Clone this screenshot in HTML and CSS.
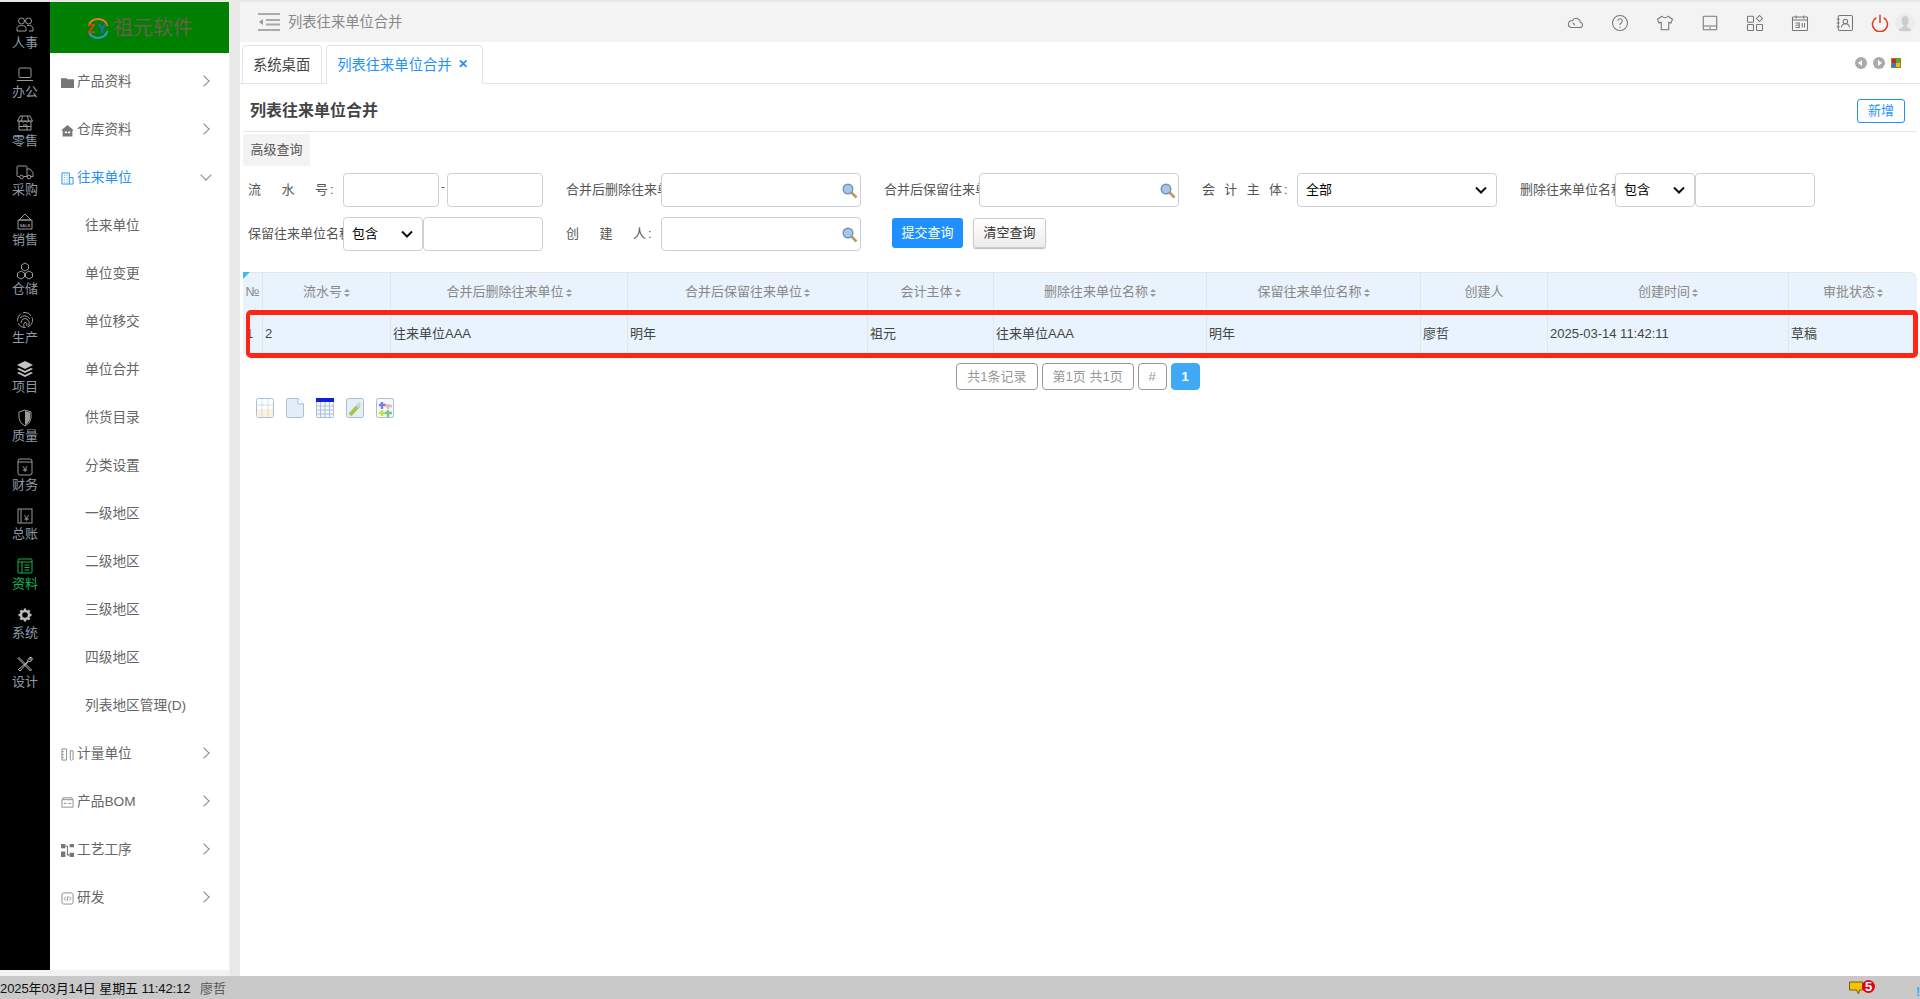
FILE: index.html
```html
<!DOCTYPE html>
<html lang="zh-CN">
<head>
<meta charset="utf-8">
<title>列表往来单位合并</title>
<link rel="stylesheet" href="styles.css">
</head>
<body>
<div class="app">
  <div class="left">
    <nav class="rail">
      <a class="rail-item"><svg class="ri" viewBox="0 0 18 18"><circle cx="5.500" cy="5" r="3"/><circle cx="12.500" cy="5" r="3"/><path d="M1 15v-2.500q0-3 4.500-3t4.500 3V15zM11 9.500q6-.5 6 3V15h-4"/></svg><span>人事</span></a>
      <a class="rail-item"><svg class="ri" viewBox="0 0 18 18"><rect x="3" y="3" width="12" height="9.500" rx="1"/><path d="M1 15.500h16"/></svg><span>办公</span></a>
      <a class="rail-item"><svg class="ri" viewBox="0 0 18 18"><path d="M4 2h10l2.500 5q-1.500 2.500-3.700 0-1.900 2.500-3.800 0-1.900 2.500-3.800 0-2.200 2.500-3.700 0zM3 8.500V16h12V8.500M1.500 7h15M6.500 2 5.500 7M11.500 2l1 5M7 11h4v5M3 12.500h12"/></svg><span>零售</span></a>
      <a class="rail-item"><svg class="ri" viewBox="0 0 18 18"><path d="M3.500 13.500H2q-1 0-1-1V4q0-1 1-1h8q1 0 1 1v9.500H7.500M11 6h3l3 3.500v4h-2"/><circle cx="5.500" cy="14" r="1.800"/><circle cx="13" cy="14" r="1.800"/></svg><span>采购</span></a>
      <a class="rail-item"><svg class="ri" viewBox="0 0 18 18"><path d="M9 1 3 7h12zM2 7h14v9H2z"/><text class="sale" x="9" y="13.500" text-anchor="middle">SALE</text></svg><span>销售</span></a>
      <a class="rail-item"><svg class="ri" viewBox="0 0 18 18"><path d="m9 1 3.500 2v4L9 9 5.500 7V3zM5 9l3.500 2v4L5 17l-3.500-2v-4zM13 9l3.500 2v4L13 17l-3.500-2v-4z"/></svg><span>仓储</span></a>
      <a class="rail-item"><svg class="ri" viewBox="0 0 18 18"><circle cx="9" cy="9" r="7.500" stroke-dasharray="9 2"/><path d="M4 7q5-5 10 1M5 12q1-6 6-4 3 2 2 7M8 16q-1-3 1-5 2 0 2 4"/></svg><span>生产</span></a>
      <a class="rail-item"><svg class="ri fill" viewBox="0 0 18 18"><path d="m9 1 8 4-8 4-8-4zM3 8l6 3 6-3 2 1-8 4-8-4zM3 12l6 3 6-3 2 1-8 4-8-4z"/></svg><span>项目</span></a>
      <a class="rail-item"><svg class="ri" viewBox="0 0 18 18"><path d="M9 1 3 3v6q0 5 6 8 6-3 6-8V3z"/><path class="solid" d="M9 2 14 3.500V9q0 4-5 7z"/></svg><span>质量</span></a>
      <a class="rail-item"><svg class="ri" viewBox="0 0 18 18"><rect x="2" y="1" width="14" height="16" rx="2"/><path d="M2 4h14"/><text class="yen" x="9" y="14" text-anchor="middle">¥</text></svg><span>财务</span></a>
      <a class="rail-item"><svg class="ri" viewBox="0 0 18 18"><rect x="2" y="2" width="14" height="14"/><path d="M5 2v14"/><text class="yen" x="10.500" y="13.500" text-anchor="middle">¥</text></svg><span>总账</span></a>
      <a class="rail-item active"><svg class="ri" viewBox="0 0 18 18"><rect x="2" y="2" width="14" height="14" rx="1"/><path d="M2 5h14M6 5v11M8.500 8h5M8.500 10.500h5M8.500 13h5"/></svg><span>资料</span></a>
      <a class="rail-item"><svg class="ri gear" viewBox="0 0 18 18"><circle cx="9" cy="9" r="4"/><path d="M9 2.500v3M9 12.500v3M2.500 9h3M12.500 9h3M4.400 4.400l2.100 2.100M11.500 11.500l2.100 2.100M4.400 13.600l2.100-2.100M11.500 6.500l2.100-2.100"/></svg><span>系统</span></a>
      <a class="rail-item"><svg class="ri tools" viewBox="0 0 18 18"><path d="M3 2.500 15.500 15l-1 1L2 3.500zM15.500 2.500a3 3 0 0 0-3.500 3.800L2.500 14.500l1.500 1.500 8.500-9.500a3 3 0 0 0 3.800-3.200l-1.800 1.500-1.200-1z"/></svg><span>设计</span></a>
    </nav>
    <aside class="menu">
      <div class="logo"><svg class="logo-mark" viewBox="0 0 24 24"><path class="arc-o" d="M2.500 10a10 10 0 0 1 19 0"/><path class="arc-b" d="M2.500 15a10 10 0 0 0 19 0"/><text class="lz" x="1" y="17">Z</text><text class="ly" x="12" y="17">Y</text></svg><span>祖元软件</span></div>
      <div class="mi"><svg class="mi-ic" viewBox="0 0 12 12"><path class="f" d="M0 2h5l1 1h6v8H0z"/></svg><span>产品资料</span><i class="chev"></i></div>
      <div class="mi"><svg class="mi-ic" viewBox="0 0 12 12"><path class="f" d="M6 1 0 6h1.500v5.500h9V6H12zM3.500 7h2v1.500h-2zm3 0h2v1.500h-2z"/></svg><span>仓库资料</span><i class="chev"></i></div>
      <div class="mi open"><svg class="mi-ic ln" viewBox="0 0 14 14"><path d="M1 1h8v12H1zM9 6h4v7H9M3 3.500h1M6 3.500h1M3 6h1M6 6h1M3 8.500h1M6 8.500h1M3 11h1M6 11h1"/></svg><span>往来单位</span><i class="chev down"></i></div>
      <div class="si">往来单位</div>
      <div class="si">单位变更</div>
      <div class="si">单位移交</div>
      <div class="si">单位合并</div>
      <div class="si">供货目录</div>
      <div class="si">分类设置</div>
      <div class="si">一级地区</div>
      <div class="si">二级地区</div>
      <div class="si">三级地区</div>
      <div class="si">四级地区</div>
      <div class="si">列表地区管理(D)</div>
      <div class="mi"><svg class="mi-ic ln" viewBox="0 0 14 14"><path d="M1 1h5v12H1zM1 4h2M1 7h2M1 10h2M10 3h3v9l-1.500 1.500L10 12z"/></svg><span>计量单位</span><i class="chev"></i></div>
      <div class="mi"><svg class="mi-ic ln" viewBox="0 0 14 14"><path d="M2 4V2h10v2M1 4h12v8H1zM3 8h3M8 8h3"/></svg><span>产品BOM</span><i class="chev"></i></div>
      <div class="mi"><svg class="mi-ic" viewBox="0 0 12 12"><path class="f" d="M0 0h4v4H0zM8 0h4v3H8zM0 7h4v5H0zM8 8h4v4H8z"/><path class="s" d="M4 2h2v8h2"/></svg><span>工艺工序</span><i class="chev"></i></div>
      <div class="mi"><svg class="mi-ic ln" viewBox="0 0 14 14"><rect x="1" y="1" width="12" height="12" rx="2"/><path d="M5 5 3.500 7 5 9M9 5l1.500 2L9 9M7.500 4.500l-1 5"/></svg><span>研发</span><i class="chev"></i></div>
    </aside>
  </div>
  <div class="gutter"></div>
  <main class="main">
    <header class="topbar">
      <div class="crumb">
        <svg class="collapse" viewBox="0 0 22 20"><path d="M0 2h22M8 8h14M8 12.500h14M0 18h22"/><path class="f" d="M5 7v6l-4-3z"/></svg>
        <span class="crumb-text">列表往来单位合并</span>
      </div>
      <div class="tools-row">
        <svg class="ti" viewBox="0 0 24 24"><path d="M7 18h11a3.500 3.500 0 0 0 1-7 5.500 5.500 0 0 0-10.500-2A4.500 4.500 0 0 0 7 18zM9 12q2 1 2.500 3"/></svg>
        <svg class="ti" viewBox="0 0 24 24"><circle cx="12" cy="12" r="10"/><path d="M9 9.500a3 3 0 1 1 4.500 2.500q-1.500 1-1.500 2.500M12 17v1.500"/></svg>
        <svg class="ti" viewBox="0 0 24 24"><path d="M8 3 2 7l2 5 3-1v10h10V11l3 1 2-5-6-4q-4 4-8 0z"/></svg>
        <svg class="ti" viewBox="0 0 24 24"><rect x="3" y="3" width="18" height="18" rx="1"/><path d="M3 16h18M11 18.500h2"/></svg>
        <svg class="ti" viewBox="0 0 24 24"><rect x="2" y="3" width="8" height="8" rx="1"/><rect x="2" y="14" width="8" height="8" rx="1"/><rect x="14" y="14" width="8" height="8" rx="1"/><path d="m18 2 4 4-4 4-4-4z"/></svg>
        <svg class="ti" viewBox="0 0 24 24"><rect x="2" y="4" width="20" height="18" rx="1"/><path d="M7 2v4M17 2v4M2 8h20M6 12h5v6H6M6 15h5M15 12v6M18 12v6"/></svg>
        <svg class="ti" viewBox="0 0 24 24"><rect x="3" y="2" width="19" height="20" rx="2"/><circle cx="12.500" cy="10" r="3"/><path d="M7 18q1-5 5.500-5t5.500 5M1 7h4M1 12h4M1 17h4"/></svg>
        <svg class="ti power" viewBox="0 0 24 24"><path d="M7 5a10 10 0 1 0 10 0M12 1v11"/></svg>
        <svg class="avatar" viewBox="0 0 20 20"><circle class="bg" cx="10" cy="10" r="10"/><path class="fg" d="M10 3q3.500 0 3.500 4.500T11.500 12v1.500l4.500 3V18H4v-1.500l4.500-3V12q-2-.5-2-4.500T10 3z"/></svg>
      </div>
    </header>
    <div class="tabbar">
      <div class="tab">系统桌面</div>
      <div class="tab current">列表往来单位合并<span class="x">✕</span></div>
      <div class="tab-tools">
        <span class="round left-arrow"></span>
        <span class="round right-arrow"></span>
        <span class="win"><i class="c1"></i><i class="c2"></i><i class="c3"></i><i class="c4"></i></span>
      </div>
    </div>
    <section class="page">
      <div class="title-row">
        <h1>列表往来单位合并</h1>
        <button class="add">新增</button>
      </div>
      <div class="adv">高级查询</div>
      <form class="filter">
        <div class="f-row">
          <label class="lab"><span class="just"><b>流</b><b>水</b><b>号</b></span>:</label>
          <input class="in n96"><span class="dash">-</span><input class="in n96">
          <label class="lab clip gap">合并后删除往来单位</label>
          <div class="search"><input class="in n200"><svg class="mag" viewBox="0 0 16 16"><path class="h" d="m9.500 9.500 5 5"/><circle class="g" cx="6" cy="6" r="4.800"/></svg></div>
          <label class="lab clip gap">合并后保留往来单位</label>
          <div class="search"><input class="in n200"><svg class="mag" viewBox="0 0 16 16"><path class="h" d="m9.500 9.500 5 5"/><circle class="g" cx="6" cy="6" r="4.800"/></svg></div>
          <label class="lab gap"><span class="just"><b>会</b><b>计</b><b>主</b><b>体</b></span>:</label>
          <select class="sel n200"><option>全部</option></select>
          <label class="lab clip gap">删除往来单位名称</label>
          <select class="sel n80"><option>包含</option></select><input class="in n120">
        </div>
        <div class="f-row">
          <label class="lab clip">保留往来单位名称</label>
          <select class="sel n80"><option>包含</option></select><input class="in n120">
          <label class="lab gap"><span class="just"><b>创</b><b>建</b><b>人</b></span>:</label>
          <div class="search"><input class="in n200"><svg class="mag" viewBox="0 0 16 16"><path class="h" d="m9.500 9.500 5 5"/><circle class="g" cx="6" cy="6" r="4.800"/></svg></div>
          <button type="button" class="submit">提交查询</button>
          <button type="button" class="clear">清空查询</button>
        </div>
      </form>
      <div class="table-wrap">
        <table class="grid">
          <colgroup><col class="c-a"><col class="c-b"><col class="c-c"><col class="c-d"><col class="c-e"><col class="c-f"><col class="c-g"><col class="c-h"><col class="c-i"><col class="c-j"></colgroup>
          <thead>
            <tr>
              <th>№</th>
              <th>流水号<i class="sort"></i></th>
              <th>合并后删除往来单位<i class="sort"></i></th>
              <th>合并后保留往来单位<i class="sort"></i></th>
              <th>会计主体<i class="sort"></i></th>
              <th>删除往来单位名称<i class="sort"></i></th>
              <th>保留往来单位名称<i class="sort"></i></th>
              <th>创建人</th>
              <th>创建时间<i class="sort"></i></th>
              <th>审批状态<i class="sort"></i></th>
            </tr>
          </thead>
          <tbody>
            <tr>
              <td class="no">1</td><td>2</td><td>往来单位AAA</td><td>明年</td><td>祖元</td><td>往来单位AAA</td><td>明年</td><td>廖哲</td><td>2025-03-14 11:42:11</td><td>草稿</td>
            </tr>
          </tbody>
        </table>
        <span class="corner"></span>
        <div class="redbox"></div>
      </div>
      <div class="pager">
        <span class="pg">共1条记录</span>
        <span class="pg">第1页 共1页</span>
        <span class="pg hash">#</span>
        <span class="pg on">1</span>
      </div>
      <div class="exports">
        <svg class="ex" viewBox="0 0 18 20"><rect class="box" x=".5" y=".5" width="17" height="19" rx="2"/><rect class="cream" x="1" y="11" width="16" height="8"/><path class="dash-ln" d="M.5 7h17M6 .5v19M12 .5v19"/></svg>
        <svg class="ex" viewBox="0 0 18 20"><path class="box pale" d="M2.500.5H12L17.500 6v11.500a2 2 0 0 1-2 2h-13a2 2 0 0 1-2-2v-15a2 2 0 0 1 2-2z"/><path class="box" d="M12 .5V6h5.500"/></svg>
        <svg class="ex" viewBox="0 0 18 20"><rect class="box white" x=".5" y=".5" width="17" height="19" rx="1"/><rect class="head" x="0" y="0" width="18" height="4"/><path class="gridln" d="M0 8h18M0 12h18M0 16h18M4.500 4v16M9 4v16M13.500 4v16"/></svg>
        <svg class="ex" viewBox="0 0 18 20"><rect class="box pale" x=".5" y=".5" width="17" height="19" rx="2"/><path class="wrench" d="m4 17 9-10"/><path class="wrench-w" d="m11 9 3-4"/></svg>
        <svg class="ex" viewBox="0 0 18 20"><rect class="box white" x=".5" y=".5" width="17" height="19" rx="2"/><path class="p1" d="M6 4v7M3 7h7"/><path class="p2" d="M12 6v5M9 8h7"/><path class="p3" d="M6 12v6M3 15h6"/><path class="p4" d="M12 12v7M9 15h7"/></svg>
      </div>
    </section>
  </main>
</div>
<footer class="status">
  <span class="clock">2025年03月14日 星期五 11:42:12</span>
  <span class="who">廖哲</span>
  <span class="msg">
    <svg class="bubble" viewBox="0 0 14 14"><path d="M.500 1h13v8H10.500l-1 4-2-4H.500z"/></svg>
    <span class="badge">5</span>
  </span>
  <span class="blip">!</span>
</footer>
</body>
</html>
```
FILE: styles.css
```css
* { box-sizing: border-box; }
html, body { margin: 0; height: 100%; overflow: hidden; }
body {
  display: flex;
  flex-direction: column;
  height: 999px;
  padding-top: 2px;
  background: #e8e8e8;
  font: 13px/1.2 "Liberation Sans", "Noto Sans CJK SC", sans-serif;
  color: #444;
}
.app { flex: 1; display: flex; min-height: 0; }
.left {
  display: flex;
  width: 230px;
  padding-bottom: 6px;
  background: #f2f2f2;
}

/* rail */
.rail { width: 50px; background: #000; padding-top: 14px; }
.rail-item {
  display: flex;
  flex-direction: column;
  align-items: center;
  height: 49.15px;
  color: #9a9a9a;
}
.rail-item span { height: 18px; line-height: 18px; color: #8d99a6; }
.ri { width: 18px; height: 18px; flex: none; fill: none; stroke: currentColor; stroke-width: 1; }
.ri.fill { fill: currentColor; stroke: none; color: #c4c4c4; }
.ri .solid { fill: currentColor; stroke: none; }
.ri .sale { font-size: 4px; fill: currentColor; stroke: none; font-weight: 700; }
.ri .yen { font-size: 9px; fill: currentColor; stroke: none; }
.ri.gear { stroke-width: 2.400; color: #bbb; }
.ri.tools { stroke-width: 1; color: #bbb; }
.rail-item.active, .rail-item.active span { color: #16b355; }

/* menu */
.menu { width: 179px; background: #fff; }
.logo {
  height: 51px;
  margin-bottom: 4px;
  background: #008000;
  display: flex;
  align-items: center;
  justify-content: center;
  gap: 3px;
  font-size: 20px;
  color: #66624a;
}
.logo-mark { width: 24px; height: 24px; fill: none; }
.arc-o { stroke: #e8792b; stroke-width: 2; }
.arc-b { stroke: #2d9bd8; stroke-width: 2; }
.lz { font-size: 13px; font-weight: 700; fill: #e03a1e; }
.ly { font-size: 13px; font-weight: 700; fill: #1f6fd0; }
.mi {
  position: relative;
  height: 48px;
  display: flex;
  align-items: center;
  padding: 2px 0 0 11px;
  gap: 3px;
  font-size: 13.7px;
  color: #666;
}
.mi-ic { width: 13px; height: 13px; fill: none; flex: none; }
.mi-ic .f { fill: #777; }
.mi-ic .s { stroke: #777; stroke-width: 1; }
.mi-ic.ln { stroke: #888; stroke-width: 1; }
.mi.open { color: #1e90ff; }
.mi.open .mi-ic.ln { stroke: #1e90ff; }
.chev {
  position: absolute;
  right: 21px;
  top: 20px;
  width: 8px;
  height: 8px;
  border-top: 1px solid #888;
  border-right: 1px solid #888;
  transform: rotate(45deg);
}
.chev.down { right: 19px; top: 18px; transform: rotate(135deg); }
.si { height: 48px; line-height: 50px; padding-left: 35px; font-size: 13.7px; color: #666; }

.gutter { width: 10px; background: #e8e8e8; }

/* main */
.main { flex: 1; min-width: 0; background: #fff; display: flex; flex-direction: column; }
.topbar {
  height: 40px;
  flex: none;
  background: #f3f3f3;
  display: flex;
  align-items: center;
  justify-content: space-between;
  padding: 0 5px 0 18px;
}
.crumb { display: flex; align-items: center; gap: 8px; font-size: 14.3px; color: #888; }
.crumb-text { padding-top: 2px; }
.collapse { width: 22px; height: 20px; fill: none; stroke: #aaa; stroke-width: 2; }
.collapse .f { fill: #999; stroke: none; }
.tools-row { display: flex; align-items: center; gap: 27px; margin-top: 2px; }
.ti { width: 18px; height: 18px; fill: none; stroke: #777; stroke-width: 1.400; }
.ti.power { stroke: #e03c28; stroke-width: 2; margin-left: -10px; }
.avatar { width: 20px; height: 20px; margin-left: -21px; }
.avatar .bg { fill: #ececec; }
.avatar .fg { fill: #ccc; }

/* tabs */
.tabbar {
  height: 42px;
  flex: none;
  display: flex;
  align-items: flex-end;
  gap: 4px;
  padding-left: 2px;
  border-bottom: 1px solid #e4e4e4;
}
.tab {
  height: 39px;
  margin-bottom: -1px;
  padding: 2px 11px 0 10px;
  display: flex;
  align-items: center;
  font-size: 14.3px;
  color: #444;
  border: 1px solid #e4e4e4;
  border-radius: 4px 4px 0 0;
}
.tab.current { color: #1e90ff; border-bottom-color: #fff; padding-right: 14px; }
.x { margin-left: 6px; font-size: 12px; font-weight: 700; line-height: 1; position: relative; top: -2px; }
.tab-tools { margin-left: auto; display: flex; align-items: center; gap: 6px; padding: 0 19px 14px 0; }
.round { position: relative; width: 12px; height: 12px; border-radius: 50%; background: #aaa; }
.round::after {
  content: "";
  position: absolute;
  top: 3px;
  border: 3px solid transparent;
}
.left-arrow::after { left: 3px; border-right: 4px solid #fff; border-left: 0; }
.right-arrow::after { left: 5px; border-left: 4px solid #fff; border-right: 0; }
.win {
  display: grid;
  grid-template-columns: 4px 4px;
  grid-auto-rows: 4px;
  border: 1px solid #8a8a20;
  width: 10px;
  height: 10px;
}
.win i { display: block; }
.c1 { background: #e02020; }
.c2 { background: #4cb030; }
.c3 { background: #1e80e0; }
.c4 { background: #f0b810; }

/* page */
.page { flex: 1; padding: 0 3px; min-height: 0; }
.title-row {
  height: 48px;
  display: flex;
  align-items: center;
  justify-content: space-between;
  padding: 6px 12px 0 7px;
  border-bottom: 1px solid #e6e6e6;
}
.title-row h1 { margin: 0; font-size: 16px; font-weight: 700; color: #444; }
.add {
  width: 48px;
  height: 24px;
  padding: 0;
  background: #fff;
  border: 1px solid #1e90ff;
  border-radius: 3px;
  color: #1e90ff;
  font: inherit;
  font-size: 13px;
}
.adv {
  width: 67px;
  height: 32px;
  margin-top: 2px;
  line-height: 32px;
  text-align: center;
  background: #f3f3f3;
  border-radius: 2px;
  color: #555;
}
.filter { padding: 7px 0 0 5px; display: flex; flex-direction: column; gap: 10px; }
.f-row { display: flex; align-items: center; height: 34px; }
.lab { flex: none; width: 95px; color: #555; display: flex; white-space: nowrap; }
.lab.clip { overflow: hidden; }
.gap { margin-left: 23px; }
.just { width: 80px; display: flex; justify-content: space-between; margin-right: 2px; }
.just b { font-weight: 400; }
.in, .sel {
  height: 34px;
  flex: none;
  border: 1px solid #ccd0d7;
  border-radius: 4px;
  background: #fff;
  font: inherit;
  color: #000;
  margin: 0;
}
.n96 { width: 96px; }
.n200 { width: 200px; }
.n80 { width: 80px; }
.n120 { width: 120px; }
.sel {
  appearance: none;
  padding-left: 8px;
  background: #fff url("data:image/svg+xml,%3Csvg xmlns='http://www.w3.org/2000/svg' viewBox='0 0 12 8'%3E%3Cpath d='M1 1.500 6 6.500 11 1.500' fill='none' stroke='%23111' stroke-width='2'/%3E%3C/svg%3E") no-repeat right 9px center / 12px 8px;
}
.dash { width: 8px; text-align: center; color: #666; position: relative; top: -3px; }
.search { position: relative; flex: none; height: 34px; }
.mag { position: absolute; right: 3px; top: 10px; width: 16px; height: 16px; fill: none; }
.mag .h { stroke: #c49a5c; stroke-width: 2.600; }
.mag .g { fill: #a9c6e6; stroke: #6f93b8; stroke-width: 1.400; }
.submit, .clear { flex: none; height: 30px; margin-top: -2px; padding: 0; font: inherit; border-radius: 3px; }
.submit { width: 71px; margin-left: 31px; background: #1e90ff; border: 0; color: #fff; }
.clear {
  width: 73px;
  margin-left: 10px;
  color: #333;
  border: 1px solid #ccc;
  background: linear-gradient(#fff, #ececec);
  box-shadow: 0 1px 1px #bbb;
}

/* table */
.table-wrap { position: relative; margin-top: 21px; width: 1674px; height: 82px; }
.grid {
  width: 1674px;
  table-layout: fixed;
  border-collapse: separate;
  border-spacing: 0;
  border-radius: 8px 8px 0 0;
  overflow: hidden;
  background: #e8f3fd;
  box-shadow: inset 0 1px 0 #e6e6e6;
}
.c-a { width: 20px; } .c-b { width: 128px; } .c-c { width: 237px; } .c-d { width: 240px; }
.c-e { width: 126px; } .c-f { width: 213px; } .c-g { width: 214px; } .c-h { width: 127px; }
.c-i { width: 241px; } .c-j { width: 128px; }
.grid th, .grid td { padding: 0 2px; border-right: 1px solid #e2e6ea; white-space: nowrap; overflow: hidden; }
.grid th { height: 38px; padding-top: 1px; font-weight: 400; color: #888; text-align: center; }
.grid td { height: 44px; padding-top: 3px; color: #444; }
.grid td.no { padding-left: 3px; }
.grid th:last-child, .grid td:last-child { border-right: 0; }
.sort {
  display: inline-block;
  position: relative;
  width: 6px;
  height: 8px;
  margin-left: 2px;
  vertical-align: -1px;
}
.sort::before, .sort::after {
  content: "";
  position: absolute;
  left: 0;
  border-left: 3px solid transparent;
  border-right: 3px solid transparent;
}
.sort::before { top: 0; border-bottom: 3px solid #999; }
.sort::after { bottom: 0; border-top: 3px solid #999; }
.corner {
  position: absolute;
  left: 0;
  top: 0;
  border-top: 7px solid #3cbcf0;
  border-right: 7px solid transparent;
}
.redbox {
  position: absolute;
  left: 3px;
  top: 38px;
  width: 1672px;
  height: 48px;
  border: 5px solid #ff2416;
  border-width: 5px 5px 5px 4px;
  border-radius: 5px;
}

/* pager */
.pager { display: flex; justify-content: center; gap: 4px; margin-top: 9px; padding-right: 4px; }
.pg {
  height: 27px;
  line-height: 25px;
  padding: 0 10px;
  border: 1px solid #999;
  border-radius: 4px;
  color: #999;
}
.pg.hash { width: 29px; text-align: center; padding: 0; }
.pg.on { width: 29px; padding: 0; text-align: center; background: #3fa9f5; border-color: #3fa9f5; color: #fff; font-weight: 700; }

/* export icons */
.exports { display: flex; gap: 12px; margin-top: 8px; padding-left: 13px; }
.ex { width: 18px; height: 20px; fill: none; }
.box { stroke: #a9bfd8; fill: #fff; }
.box.pale { fill: #e4eef9; }
.box.white { fill: #f4f7fb; }
.dash-ln { stroke: #c4d2e2; stroke-dasharray: 2 1; }
.cream { fill: #fbf1df; }
.head { fill: #0b1ee8; }
.gridln { stroke: #a9bfd8; }
.wrench { stroke: #a6c64a; stroke-width: 4; }
.wrench-w { stroke: #d4d4d4; stroke-width: 3; }
.p1, .p2, .p3, .p4 { stroke-width: 2.400; }
.p1 { stroke: #7e7ed8; }
.p2 { stroke: #e2b8b8; }
.p3 { stroke: #c4e04c; }
.p4 { stroke: #7ec48a; }

/* status */
.status {
  position: relative;
  height: 23px;
  flex: none;
  display: flex;
  align-items: center;
  padding-top: 3px;
  background: #c9c9c9;
  color: #111;
}
.clock { width: 200px; white-space: nowrap; letter-spacing: -0.1px; }
.who { color: #555; }
.msg { margin-left: auto; margin-right: 45px; display: flex; align-items: center; position: relative; top: -1px; }
.bubble { width: 14px; height: 14px; fill: #f5c400; stroke: #7a5c00; stroke-width: 1; }
.badge {
  position: relative;
  top: -2px;
  width: 13px;
  height: 13px;
  margin-left: -1px;
  border-radius: 50%;
  background: #e60012;
  color: #fff;
  font-weight: 700;
  font-size: 13px;
  line-height: 13px;
  text-align: center;
}
.blip { position: absolute; right: 0; top: 8px; color: #3fa9f5; font-size: 13px; font-weight: 700; }
```
